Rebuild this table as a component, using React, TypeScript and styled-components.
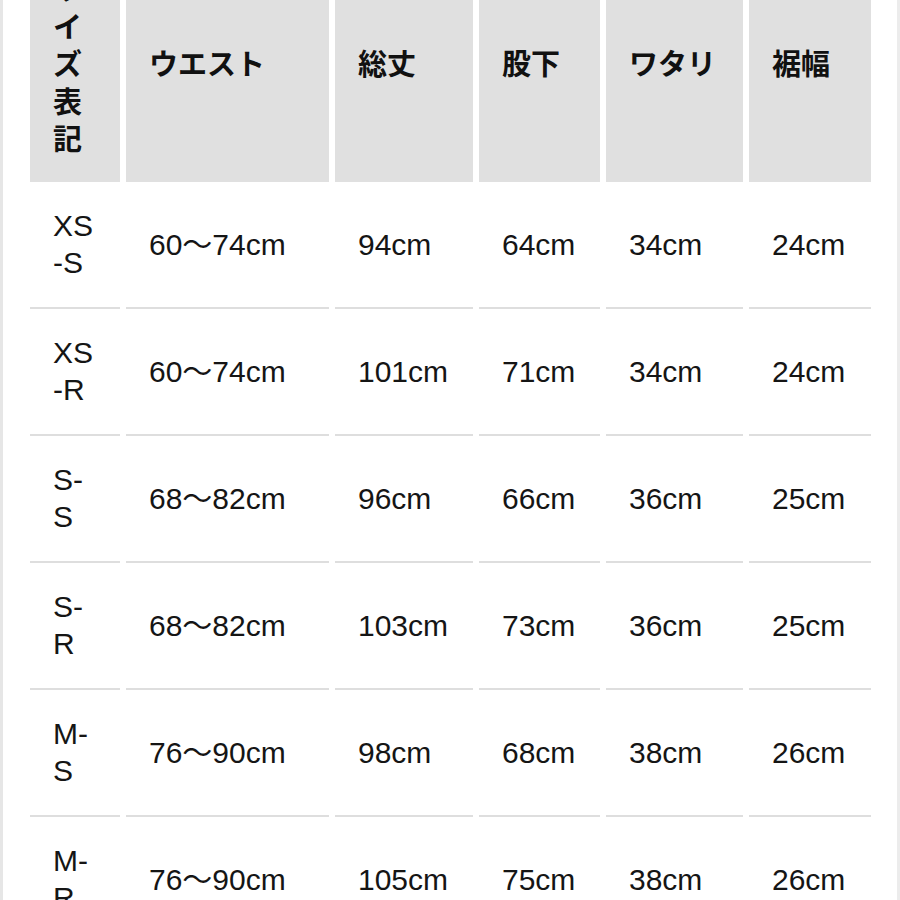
import React from 'react';
import styled, { createGlobalStyle } from 'styled-components';

const GlobalStyle = createGlobalStyle`
	* {
		box-sizing: border-box;
	}
	html,
	body {
		margin: 0;
		padding: 0;
		background: #ffffff;
	}
`;

const Screen = styled.div`
	width: 900px;
	height: 900px;
	overflow: hidden;
	background: #ffffff;
	border-left: 3px solid #e6e6e6;
	border-right: 3px solid #ececec;
	padding-left: 21px;
	font-family: 'Liberation Sans', 'Noto Sans CJK JP', sans-serif;
	color: #151515;
`;

const SizeTable = styled.table`
	margin-top: -56px;
	border-collapse: separate;
	border-spacing: 6px 0;
	table-layout: fixed;
`;

const HeadCell = styled.th<{ $width: number }>`
	width: ${(p) => p.$width}px;
	background: #e0e0e0;
	padding: 25px 23px;
	text-align: left;
	vertical-align: middle;
	font-family: 'Noto Sans CJK JP', sans-serif;
	font-size: 29px;
	font-weight: 700;
	line-height: 37.5px;
	color: #111111;
`;

const Cell = styled.td`
	height: 127px;
	padding: 0 23px;
	border-bottom: 2px solid #dedede;
	vertical-align: middle;
	font-size: 30px;
	line-height: 37px;
	white-space: nowrap;
`;

const Line = styled.div`
	display: block;
`;

const HEADERS = [
	{ label: 'サイズ表記', width: 90 },
	{ label: 'ウエスト', width: 203 },
	{ label: '総丈', width: 138 },
	{ label: '股下', width: 121 },
	{ label: 'ワタリ', width: 137 },
	{ label: '裾幅', width: 122 },
];

const ROWS = [
	{ size: ['XS', '-S'], waist: '60〜74cm', length: '94cm', inseam: '64cm', thigh: '34cm', hem: '24cm' },
	{ size: ['XS', '-R'], waist: '60〜74cm', length: '101cm', inseam: '71cm', thigh: '34cm', hem: '24cm' },
	{ size: ['S-', 'S'], waist: '68〜82cm', length: '96cm', inseam: '66cm', thigh: '36cm', hem: '25cm' },
	{ size: ['S-', 'R'], waist: '68〜82cm', length: '103cm', inseam: '73cm', thigh: '36cm', hem: '25cm' },
	{ size: ['M-', 'S'], waist: '76〜90cm', length: '98cm', inseam: '68cm', thigh: '38cm', hem: '26cm' },
	{ size: ['M-', 'R'], waist: '76〜90cm', length: '105cm', inseam: '75cm', thigh: '38cm', hem: '26cm' },
];

const App = () => {
	return (
		<>
			<GlobalStyle />
			<Screen>
				<SizeTable>
					<thead>
						<tr>
							{HEADERS.map((h) => (
								<HeadCell key={h.label} $width={h.width}>
									{h.label}
								</HeadCell>
							))}
						</tr>
					</thead>
					<tbody>
						{ROWS.map((row, i) => (
							<tr key={i}>
								<Cell>
									{row.size.map((s) => (
										<Line key={s}>{s}</Line>
									))}
								</Cell>
								<Cell>{row.waist}</Cell>
								<Cell>{row.length}</Cell>
								<Cell>{row.inseam}</Cell>
								<Cell>{row.thigh}</Cell>
								<Cell>{row.hem}</Cell>
							</tr>
						))}
					</tbody>
				</SizeTable>
			</Screen>
		</>
	);
};

export default App;
